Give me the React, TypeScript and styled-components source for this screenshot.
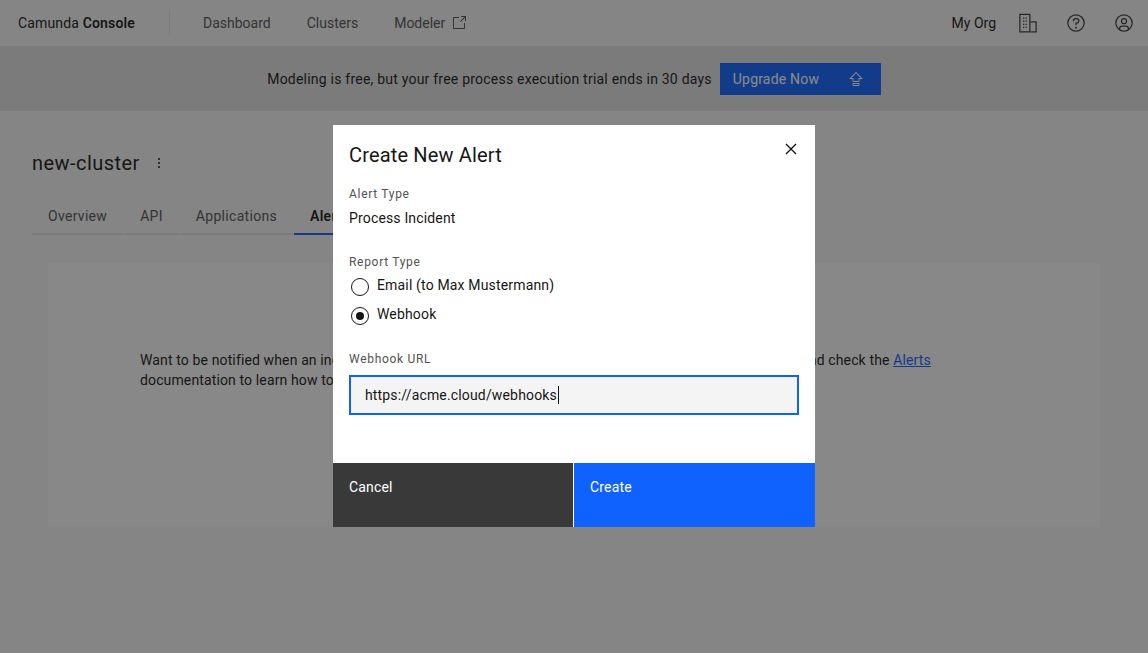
import { createGlobalStyle, styled } from "styled-components"

const FONT = `"Roboto", "Liberation Sans", sans-serif`

const GlobalStyle = createGlobalStyle`
  html, body {
    margin: 0;
    padding: 0;
    height: 100%;
    background: #f4f4f4;
    color: #161616;
    font-family: ${FONT};
    font-size: 14px;
    letter-spacing: 0.16px;
  }
  * {
    box-sizing: border-box;
  }
`

const Icon = ({ size = 16, children }: { size?: number; children: React.ReactNode }) => (
  <svg width={size} height={size} viewBox="0 0 32 32" fill="currentColor" aria-hidden="true">
    {children}
  </svg>
)

export default function App() {
  return (
    <Page>
      <GlobalStyle />
      <Header>
        <Brand>
          Camunda <b>Console</b>
        </Brand>
        <Nav>
          <NavItem>Dashboard</NavItem>
          <NavItem>Clusters</NavItem>
          <NavItem>
            Modeler
            <Icon>
              <path d="M26,28H6a2,2,0,0,1-2-2V6A2,2,0,0,1,6,4H16V6H6V26H26V16h2V26A2,2,0,0,1,26,28Z" />
              <polygon points="20 2 20 4 26.586 4 18 12.586 19.414 14 28 5.414 28 12 30 12 30 2 20 2" />
            </Icon>
          </NavItem>
        </Nav>
        <HeaderRight>
          <OrgName>My Org</OrgName>
          <HeaderIcon>
            <Icon size={20}>
              <path d="M3,1H19a1,1,0,0,1,1,1V31H2V2A1,1,0,0,1,3,1ZM4,3V29H18V3Z" />
              <path d="M20,13h9a1,1,0,0,1,1,1V31H20V29h8V15H20Z" />
              <path d="M8,7h2v2H8Zm4,0h2v2H12ZM8,12h2v2H8Zm4,0h2v2H12ZM8,17h2v2H8Zm4,0h2v2H12ZM8,22h2v2H8Zm4,0h2v2H12Z" />
            </Icon>
          </HeaderIcon>
          <HeaderIcon>
            <Icon size={20}>
              <path d="M16,2A14,14,0,1,0,30,16,14,14,0,0,0,16,2Zm0,26A12,12,0,1,1,28,16,12,12,0,0,1,16,28Z" />
              <circle cx="16" cy="23.5" r="1.5" />
              <path d="M17,8H15.5A4.49,4.49,0,0,0,11,12.5V13h2v-.5A2.5,2.5,0,0,1,15.5,10H17a2.5,2.5,0,0,1,0,5H15v4.5h2V17a4.5,4.5,0,0,0,0-9Z" />
            </Icon>
          </HeaderIcon>
          <HeaderIcon>
            <Icon size={20}>
              <path d="M16,8a5,5,0,1,0,5,5A5,5,0,0,0,16,8Zm0,8a3,3,0,1,1,3-3A3,3,0,0,1,16,16Z" />
              <path d="M16,2A14,14,0,1,0,30,16,14,14,0,0,0,16,2ZM10,26.3765V25a3,3,0,0,1,3-3h6a3,3,0,0,1,3,3v1.3765a11.9,11.9,0,0,1-12,0Zm13.9925-1.4507A5,5,0,0,0,19,20H13a5,5,0,0,0-4.9925,4.9258,12,12,0,1,1,15.985,0Z" />
            </Icon>
          </HeaderIcon>
        </HeaderRight>
      </Header>

      <Banner>
        <BannerText>Modeling is free, but your free process execution trial ends in 30 days</BannerText>
        <UpgradeButton>
          Upgrade Now
          <Icon>
            <path d="M21,24H11a2,2,0,0,0-2,2v2a2,2,0,0,0,2,2H21a2,2,0,0,0,2-2V26A2,2,0,0,0,21,24Zm0,4H11V26H21Z" />
            <path d="M28.707,14.293l-12-12a1,1,0,0,0-1.414,0l-12,12A1,1,0,0,0,4,16H9v4a2,2,0,0,0,2,2H21a2,2,0,0,0,2-2V16h5a1,1,0,0,0,.707-1.707ZM21,14v6H11V14H6.414L16,4.414,25.586,14Z" />
          </Icon>
        </UpgradeButton>
      </Banner>

      <Content>
        <TitleRow>
          <ClusterName>new-cluster</ClusterName>
          <Icon>
            <circle cx="16" cy="8" r="2" />
            <circle cx="16" cy="16" r="2" />
            <circle cx="16" cy="24" r="2" />
          </Icon>
        </TitleRow>
        <Tabs>
          <Tab>Overview</Tab>
          <Tab>API</Tab>
          <Tab>Applications</Tab>
          <Tab $active>Alerts</Tab>
        </Tabs>
        <EmptyCard>
          <EmptyText>
            Want to be notified when an incident occurs in one of your processes? Create a new alert for this cluster and
            check the <DocLink>Alerts</DocLink> documentation to learn how to get started.
          </EmptyText>
        </EmptyCard>
      </Content>

      <Overlay>
        <Modal>
          <ModalTitle>Create New Alert</ModalTitle>
          <CloseButton>
            <Icon size={22}>
              <polygon points="24 9.4 22.6 8 16 14.6 9.4 8 8 9.4 14.6 16 8 22.6 9.4 24 16 17.4 22.6 24 24 22.6 17.4 16 24 9.4" />
            </Icon>
          </CloseButton>
          <ModalBody>
            <FieldLabel>Alert Type</FieldLabel>
            <FieldValue>Process Incident</FieldValue>
            <FieldLabel>Report Type</FieldLabel>
            <RadioGroup>
              <RadioRow>
                <RadioCircle />
                Email (to Max Mustermann)
              </RadioRow>
              <RadioRow>
                <RadioCircle $checked />
                Webhook
              </RadioRow>
            </RadioGroup>
            <FieldLabel>Webhook URL</FieldLabel>
            <UrlInput>
              https://acme.cloud/webhooks
              <Caret />
            </UrlInput>
          </ModalBody>
          <ModalFooter>
            <FooterButton>Cancel</FooterButton>
            <FooterButton $primary>Create</FooterButton>
          </ModalFooter>
        </Modal>
      </Overlay>
    </Page>
  )
}

const Page = styled.div`
  min-height: 100vh;
  position: relative;
`
const Header = styled.header`
  display: flex;
  align-items: center;
  height: 46px;
  background: #f4f4f4;
  padding-left: 18px;
`
const Brand = styled.div`
  width: 152px;
  height: 24px;
  line-height: 24px;
  border-right: 1px solid #e0e0e0;
  b {
    font-weight: 600;
  }
`
const Nav = styled.nav`
  display: flex;
  gap: 36px;
  margin-left: 33px;
  letter-spacing: 0;
`
const NavItem = styled.div`
  display: flex;
  align-items: center;
  gap: 6px;
  color: #525252;
`
const HeaderRight = styled.div`
  display: flex;
  align-items: center;
  margin-left: auto;
`
const OrgName = styled.div`
  margin-right: 8px;
  letter-spacing: 0;
`
const HeaderIcon = styled.div`
  display: flex;
  align-items: center;
  justify-content: center;
  width: 48px;
  height: 46px;
  color: #393939;
`
const Banner = styled.div`
  display: flex;
  align-items: center;
  justify-content: center;
  gap: 8px;
  height: 65px;
  background: #e0e0e0;
`
const BannerText = styled.span`
  letter-spacing: 0.22px;
`
const UpgradeButton = styled.div`
  display: flex;
  align-items: center;
  justify-content: space-between;
  width: 161px;
  height: 32px;
  padding: 0 17px 0 13px;
  background: #0f62fe;
  color: #fff;
  letter-spacing: 0.2px;
`
const Content = styled.main`
  padding: 0 48px 0 32px;
`
const TitleRow = styled.div`
  display: flex;
  align-items: center;
  gap: 11px;
  height: 28px;
  margin-top: 38px;
`
const ClusterName = styled.h1`
  margin: 0;
  font-size: 20px;
  font-weight: 400;
  line-height: 28px;
  letter-spacing: 0.45px;
`
const Tabs = styled.div`
  display: flex;
  gap: 1px;
  margin-top: 17px;
`
const Tab = styled.div<{ $active?: boolean }>`
  height: 41px;
  padding: 13px 16px 0;
  line-height: 18px;
  letter-spacing: 0.3px;
  border-bottom: 2px solid ${({ $active }) => ($active ? "#0f62fe" : "#e0e0e0")};
  color: ${({ $active }) => ($active ? "#161616" : "#525252")};
  font-weight: ${({ $active }) => ($active ? 600 : 400)};
`
const EmptyCard = styled.section`
  height: 264px;
  margin: 28px 0 0 16px;
  padding: 87px 92px 0;
  background: #fafafa;
`
const EmptyText = styled.p`
  margin: 0;
  line-height: 20px;
  letter-spacing: 0.13px;
  color: #161616;
`
const DocLink = styled.a`
  color: #0f62fe;
  text-decoration: underline;
`
const Overlay = styled.div`
  position: fixed;
  inset: 0;
  display: flex;
  align-items: center;
  justify-content: center;
  padding-bottom: 1px;
  background: rgba(22, 22, 22, 0.5);
`
const Modal = styled.div`
  position: relative;
  display: flex;
  flex-direction: column;
  width: 482px;
  height: 402px;
  background: #fff;
`
const ModalTitle = styled.h2`
  margin: 0;
  padding: 16px 16px 0;
  font-size: 20px;
  font-weight: 400;
  line-height: 28px;
`
const CloseButton = styled.div`
  position: absolute;
  top: 0;
  right: 0;
  display: flex;
  align-items: center;
  justify-content: center;
  width: 48px;
  height: 48px;
`
const ModalBody = styled.div`
  flex: 1;
  padding: 17px 16px 0;
`
const FieldLabel = styled.div`
  font-size: 12px;
  line-height: 16px;
  letter-spacing: 0.7px;
  color: #525252;
  margin-bottom: 7px;
`
const FieldValue = styled.div`
  line-height: 18px;
  margin-bottom: 27px;
`
const RadioGroup = styled.div`
  display: flex;
  flex-direction: column;
  gap: 9px;
  margin-top: -1px;
  margin-bottom: 26px;
`
const RadioRow = styled.div`
  display: flex;
  align-items: flex-start;
  gap: 8px;
  height: 20px;
  padding-left: 2px;
  line-height: 18px;
`
const RadioCircle = styled.span<{ $checked?: boolean }>`
  flex: none;
  position: relative;
  width: 18px;
  height: 18px;
  margin-top: 2px;
  border: 1px solid #161616;
  border-radius: 50%;
  &::after {
    content: "";
    display: ${({ $checked }) => ($checked ? "block" : "none")};
    position: absolute;
    inset: 4px;
    border-radius: 50%;
    background: #161616;
  }
`
const UrlInput = styled.div`
  display: flex;
  align-items: center;
  height: 40px;
  margin-top: 8px;
  padding: 0 14px;
  background: #f4f4f4;
  border: 2px solid #0f62fe;
`
const Caret = styled.span`
  width: 1px;
  height: 18px;
  margin-left: 1px;
  background: #161616;
`
const ModalFooter = styled.div`
  display: grid;
  grid-template-columns: 240px 1fr;
  gap: 1px;
  height: 64px;
`
const FooterButton = styled.div<{ $primary?: boolean }>`
  padding: 15px 16px 0;
  line-height: 18px;
  color: #fff;
  background: ${({ $primary }) => ($primary ? "#0f62fe" : "#393939")};
`
